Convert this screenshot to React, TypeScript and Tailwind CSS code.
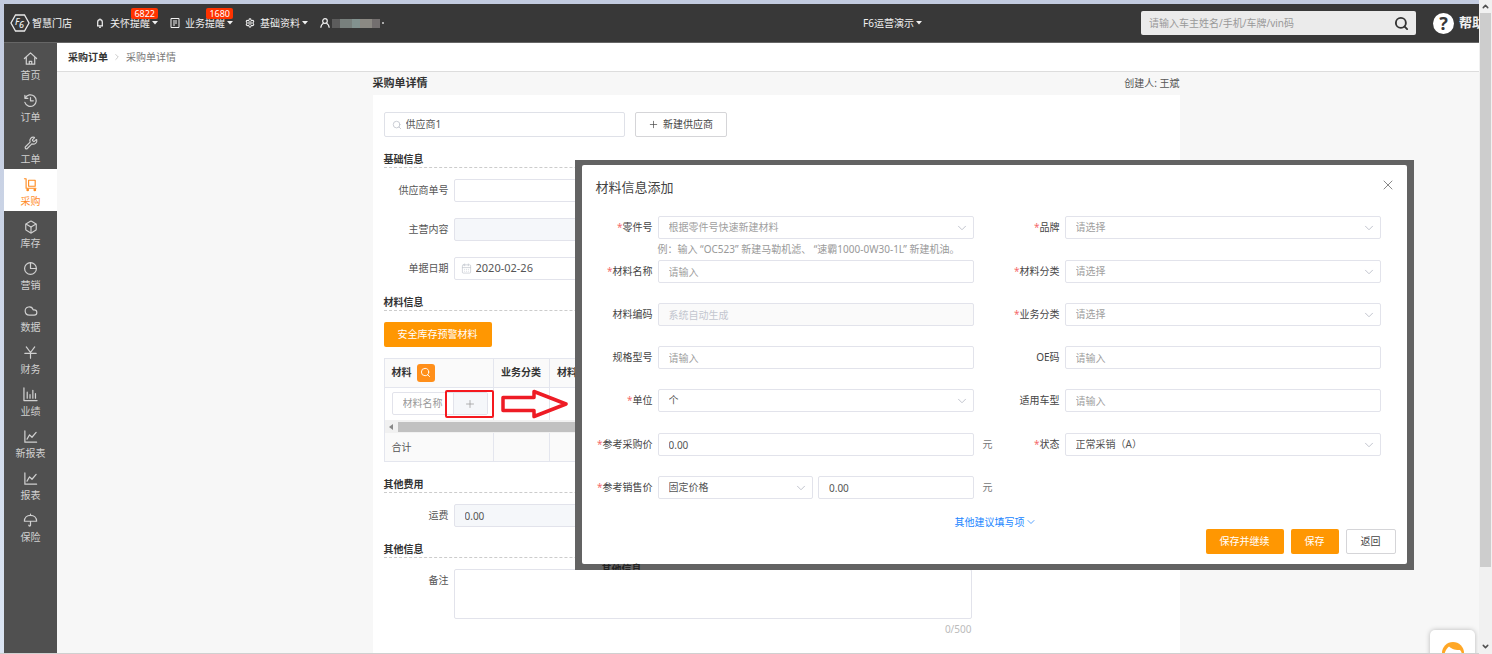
import clsx from "clsx";
import {
  Box,
  CalendarDays,
  ChevronDown,
  ChevronRight,
  Cloud,
  Plus,
  Search,
  Settings,
  Wrench,
  X,
} from "lucide-react";
import { ReactNode } from "react";

const FIELD_STYLE =
  "h-[23px] w-full min-w-0 rounded-[2px] border border-[#e2e3eb] bg-white px-[10px] text-[#555] outline-none placeholder:text-[#a0a0a0] disabled:bg-[#fafafa] disabled:placeholder:text-[#c3c6cf]";

const Svg = ({ children }: { children: ReactNode }) => (
  <svg
    viewBox="0 0 16 16"
    className="size-[15px]"
    fill="none"
    stroke="currentColor"
    strokeWidth="1.3"
    strokeLinecap="round"
    strokeLinejoin="round"
  >
    {children}
  </svg>
);

const HomeIcon = () => (
  <Svg>
    <path d="M1.5 8 8 2l6.500 6M3.500 7v7h9V7M6.700 14v-3h2.600v3" />
  </Svg>
);

const HistoryIcon = () => (
  <Svg>
    <path d="M2.300 5.500A6.200 6.200 0 1 1 2 10M2 2.500v3.200h3.200M8 5v3.300h3" />
  </Svg>
);

const TrolleyIcon = () => (
  <Svg>
    <path d="M1.500 1.800h1.800V12h10.500M6 3.500h7v6.300H6z" strokeWidth="1.200" />
    <circle cx="5" cy="13.800" r=".8" />
    <circle cx="12.600" cy="13.800" r=".8" />
  </Svg>
);

const PieIcon = () => (
  <Svg>
    <circle cx="8" cy="8" r="6.300" />
    <path d="M8 1.700V8h6.300" />
  </Svg>
);

const YenIcon = () => (
  <Svg>
    <path d="M3.500 2 8 8l4.500-6M8 8v6M2 9h12" />
  </Svg>
);

const BarsIcon = () => (
  <Svg>
    <path d="M1 1v13.500h14M4.500 12V5.500M7.500 12V8M10.500 12V3.500M13.300 12V7" />
  </Svg>
);

const LineIcon = () => (
  <Svg>
    <path d="M2 2v12h12.500M4.300 10.800 7 6.200l2.600 2.600L14 3.600" />
  </Svg>
);

const UmbrellaIcon = () => (
  <Svg>
    <path d="M1.500 8.800C1.500 5 4.200 2.500 8 2.500s6.500 2.500 6.500 6.300zM8 2.500V1.300M8 8.800V13c0 1.200-1.800 1.200-1.800 0" />
  </Svg>
);

const MENUS = [
  { label: "首页", icon: <HomeIcon /> },
  { label: "订单", icon: <HistoryIcon /> },
  { label: "工单", icon: <Wrench size={14} strokeWidth={2} /> },
  { label: "采购", icon: <TrolleyIcon />, active: true },
  { label: "库存", icon: <Box size={14} strokeWidth={2} /> },
  { label: "营销", icon: <PieIcon /> },
  { label: "数据", icon: <Cloud size={14} strokeWidth={2} /> },
  { label: "财务", icon: <YenIcon /> },
  { label: "业绩", icon: <BarsIcon /> },
  { label: "新报表", icon: <LineIcon /> },
  { label: "报表", icon: <LineIcon /> },
  { label: "保险", icon: <UmbrellaIcon /> },
];

const Caret = () => (
  <svg viewBox="0 0 6 4" className="h-1 w-[6px] shrink-0" fill="currentColor">
    <path d="M0 0h6L3 3.500z" />
  </svg>
);

const BellIcon = () => (
  <svg viewBox="0 0 10 10" className="size-[10px]" fill="none" stroke="currentColor" strokeWidth="1.200">
    <path d="M2 7.800h6M2.700 7.500V4a2.300 2.300 0 0 1 4.600 0v3.500M5 1.700V.6M4.200 9.300h1.600" />
  </svg>
);

const NoteIcon = () => (
  <svg viewBox="0 0 10 10" className="size-[10px]" fill="none" stroke="currentColor">
    <path d="M1 .5h8v9H1zM3 3h4M3 5h4M3 7h2" />
  </svg>
);

const UserIcon = () => (
  <svg viewBox="0 0 10 10" className="size-[10px]" fill="none" stroke="currentColor" strokeWidth="1.200">
    <circle cx="5" cy="3" r="2.300" />
    <path d="M.8 9.800C1 7.400 2.300 5.800 3.600 5.200M9.200 9.800C9 7.400 7.700 5.800 6.400 5.200" />
  </svg>
);

type NavItemProps = { icon: ReactNode; label: string; badge?: string };

function NavItem({ icon, label, badge }: NavItemProps) {
  return (
    <button type="button" className="relative flex items-center gap-[2px]">
      <span className="mr-[3px] w-[10px]">{icon}</span>
      {label}
      <Caret />
      {badge && (
        <span className="absolute -top-2 right-0 rounded-[2px] bg-[#ff3300] px-[3px] text-[9px] leading-[11px] text-white">
          {badge}
        </span>
      )}
    </button>
  );
}

function Header() {
  return (
    <header className="flex h-[39px] shrink-0 items-center overflow-hidden border-b border-[#666] bg-[#383838] pl-[6px] whitespace-nowrap text-[#f0f0f0]">
      <a href="#home" className="flex items-center gap-[2px] font-medium text-[#ddd]">
        <svg viewBox="0 0 20 18" className="h-[18px] w-5" fill="none">
          <path
            d="M5.500 1h9L19 9l-4.500 8h-9L1 9z"
            stroke="#e8e8e8"
            strokeWidth="1.300"
          />
          <text x="5" y="11" fill="#eee" fontSize="9" fontStyle="italic">
            F
          </text>
          <text x="9" y="14" fill="#eee" fontSize="9" fontStyle="italic">
            6
          </text>
        </svg>
        智慧门店
      </a>
      <nav className="ml-[23px] flex items-center gap-3">
        <NavItem icon={<BellIcon />} label="关怀提醒" badge="6822" />
        <NavItem icon={<NoteIcon />} label="业务提醒" badge="1680" />
        <NavItem icon={<Settings size={10} strokeWidth={2.5} />} label="基础资料" />
        <button type="button" aria-label="用户" className="flex items-center gap-[2px]">
          <UserIcon />
          <span className="flex h-[9px] w-12">
            <span className="w-2 bg-[#5c5c5c]" />
            <span className="w-3 bg-[#78807d]" />
            <span className="w-2 bg-[#82928f]" />
            <span className="w-3 bg-[#8b8983]" />
            <span className="w-2 bg-[#736f6f]" />
          </span>
          <span className="size-[2px] bg-[#aaa]" />
        </button>
      </nav>
      <button type="button" className="mr-[219px] ml-auto flex items-center gap-[2px]">
        F6运营演示
        <Caret />
      </button>
      <div className="flex h-6 w-[275px] items-center rounded-[2px] bg-[#ebebeb] pr-[7px] pl-2">
        <input
          aria-label="搜索"
          placeholder="请输入车主姓名/手机/车牌/vin码"
          className="min-w-0 flex-1 bg-transparent text-[#333] outline-none placeholder:text-[#999]"
        />
        <Search size={15} strokeWidth={3} className="text-[#333]" />
      </div>
      <a href="#help" className="ml-[17px] flex w-[46px] items-center gap-[5px] text-[13px] font-bold">
        <span className="flex size-[21px] shrink-0 items-center justify-center rounded-full bg-white text-[18px] leading-none text-[#383838]">
          ?
        </span>
        帮助
      </a>
    </header>
  );
}

function Sidebar() {
  return (
    <aside className="w-[53px] shrink-0 bg-[#505050] text-[#d0d0d0]">
      {MENUS.map(({ label, icon, active }) => (
        <a
          key={label}
          href="#menu"
          className={clsx(
            "flex h-[42px] flex-col items-center justify-center gap-px pt-[6px]",
            active && "bg-white text-[#ff8b1f]",
          )}
        >
          <span className="flex h-[15px] items-center">{icon}</span>
          <span className="leading-[16px]">{label}</span>
        </a>
      ))}
    </aside>
  );
}

function SectionTitle({ children }: { children: ReactNode }) {
  return (
    <h2 className="mt-[14px] mb-[11px] h-[17px] border-b border-dashed border-[#ccc] leading-4 font-bold text-[#333]">
      {children}
    </h2>
  );
}

type RowProps = { id: string; label: string; children: ReactNode };

function OrderRow({ id, label, children }: RowProps) {
  return (
    <div className="flex items-start gap-[5px]">
      <label htmlFor={id} className="w-[65px] text-right leading-[22px]">
        {label}
      </label>
      {children}
    </div>
  );
}

function MaterialTable() {
  return (
    <div className="relative mt-[11px] border border-[#e4e6ee]">
      <table className="w-full table-fixed text-left">
        <colgroup>
          <col className="w-[109px]" />
          <col className="w-14" />
          <col />
        </colgroup>
        <thead>
          <tr className="h-7 border-b border-[#e4e6ee] bg-[#fafafa] text-[#333]">
            <th className="border-r border-[#e4e6ee] pl-[7px]">
              <div className="flex items-center gap-[5px]">
                材料
                <button
                  type="button"
                  aria-label="搜索材料"
                  className="flex size-[18px] items-center justify-center rounded-[3px] bg-[#ff8f1a] text-white"
                >
                  <Search size={11} strokeWidth={2} />
                </button>
              </div>
            </th>
            <th className="border-r border-[#e4e6ee] pl-[7px]">业务分类</th>
            <th className="pl-[7px]">材料分类</th>
          </tr>
        </thead>
        <tbody>
          <tr className="h-[33px]">
            <td className="border-r border-[#e4e6ee] pl-[7px]">
              <div className="flex h-[23px] w-24 overflow-hidden rounded-[2px] border border-[#e2e3eb]">
                <input
                  aria-label="材料名称"
                  placeholder="材料名称"
                  className="w-[60px] pl-[10px] outline-none placeholder:text-[#999]"
                />
                <button
                  type="button"
                  aria-label="新增材料"
                  className="flex flex-1 items-center justify-center border-l border-[#e2e3eb] bg-[#f5f7fa] text-[#999]"
                >
                  <Plus size={12} strokeWidth={1.5} />
                </button>
              </div>
            </td>
            <td className="border-r border-[#e4e6ee]" />
            <td />
          </tr>
        </tbody>
      </table>
      <div className="flex h-[13px] items-center bg-[#f1f1f1] pr-3 pl-1">
        <svg viewBox="0 0 4 6" className="mr-[5px] h-[6px] w-1" fill="#888">
          <path d="M4 0v6L0 3z" />
        </svg>
        <div className="h-[10px] w-1/2 bg-[#c1c1c1]" />
      </div>
      <table className="w-full table-fixed">
        <colgroup>
          <col className="w-[109px]" />
          <col className="w-14" />
          <col />
        </colgroup>
        <tbody>
          <tr className="h-7 bg-[#fafafa]">
            <td className="border-r border-[#e4e6ee] pl-[7px]">合计</td>
            <td className="border-r border-[#e4e6ee]" />
            <td />
          </tr>
        </tbody>
      </table>

      {/* 新增按钮的操作指引 */}
      <div className="absolute top-[31px] left-[60px] h-7 w-[49px] rounded-[2px] border-2 border-[#f5191f]" />
      <svg
        viewBox="0 0 68 30"
        className="absolute top-[30px] left-[116px] h-[30px] w-[68px]"
        fill="none"
        stroke="#ee1c25"
        strokeWidth="3.500"
        strokeLinejoin="round"
      >
        <path d="M2 8.500h31V2.500L65 15 33 27.500V21.500H2z" />
      </svg>
    </div>
  );
}

type FieldProps = {
  id: string;
  label: string;
  required?: boolean;
  unit?: string;
  hint?: string;
  children: ReactNode;
};

function Field({ id, label, required, unit, hint, children }: FieldProps) {
  return (
    <div className="flex items-start gap-[5px]">
      <label htmlFor={id} className="w-[60px] shrink-0 text-right leading-[23px] text-[#444]">
        {required && <span className="text-[#f56c6c]">*</span>}
        {label}
      </label>
      <div className="w-[316px]">
        <div className="flex gap-[5px]">{children}</div>
        {hint && <p className="leading-5 whitespace-nowrap text-[#999]">{hint}</p>}
      </div>
      {unit && <span className="ml-1 leading-[23px] text-[#777]">{unit}</span>}
    </div>
  );
}

type SelectProps = { id: string; value: string; muted?: boolean };

function Select({ id, value, muted }: SelectProps) {
  return (
    <div className="relative min-w-0 flex-1">
      <select
        id={id}
        className={clsx(FIELD_STYLE, "appearance-none", muted && "text-[#a0a0a0]")}
      >
        <option>{value}</option>
      </select>
      <ChevronDown
        size={14}
        strokeWidth={1.5}
        className="pointer-events-none absolute top-[5px] right-[5px] text-[#b8bcc6]"
      />
    </div>
  );
}

function MaterialDialog() {
  return (
    <div className="absolute top-[65px] left-[202px] h-[410px] w-[839px] overflow-hidden bg-[#636363] px-[7px] pt-[5px]">
      <section
        role="dialog"
        aria-label="材料信息添加"
        className="h-[399px] rounded-[2px] bg-white pt-3 pr-[11px] pl-[14px]"
      >
        <div className="flex h-[22px] items-start justify-between">
          <h2 className="text-[13px] leading-5 text-[#444]">材料信息添加</h2>
          <button type="button" aria-label="关闭" className="text-[#888]">
            <X size={16} strokeWidth={1.5} />
          </button>
        </div>
        <div className="mt-[17px] -ml-[3px] grid grid-cols-[auto_auto] grid-rows-[44px_43px_43px_43px_44px_43px_28px] justify-between pr-[15px]">
          <Field
            id="partNo"
            label="零件号"
            required
            hint="例：输入 “OC523” 新建马勒机滤、 “速霸1000-0W30-1L” 新建机油。"
          >
            <Select id="partNo" value="根据零件号快速新建材料" muted />
          </Field>
          <Field id="brand" label="品牌" required>
            <Select id="brand" value="请选择" muted />
          </Field>
          <Field id="materialName" label="材料名称" required>
            <input id="materialName" placeholder="请输入" className={FIELD_STYLE} />
          </Field>
          <Field id="materialType" label="材料分类" required>
            <Select id="materialType" value="请选择" muted />
          </Field>
          <Field id="materialCode" label="材料编码">
            <input
              id="materialCode"
              placeholder="系统自动生成"
              disabled
              className={FIELD_STYLE}
            />
          </Field>
          <Field id="bizType" label="业务分类" required>
            <Select id="bizType" value="请选择" muted />
          </Field>
          <Field id="spec" label="规格型号">
            <input id="spec" placeholder="请输入" className={FIELD_STYLE} />
          </Field>
          <Field id="oeCode" label="OE码">
            <input id="oeCode" placeholder="请输入" className={FIELD_STYLE} />
          </Field>
          <Field id="unit" label="单位" required>
            <Select id="unit" value="个" />
          </Field>
          <Field id="carModel" label="适用车型">
            <input id="carModel" placeholder="请输入" className={FIELD_STYLE} />
          </Field>
          <Field id="purchasePrice" label="参考采购价" required unit="元">
            <input id="purchasePrice" defaultValue="0.00" className={FIELD_STYLE} />
          </Field>
          <Field id="status" label="状态" required>
            <Select id="status" value="正常采销（A）" />
          </Field>
          <Field id="salePriceType" label="参考销售价" required unit="元">
            <Select id="salePriceType" value="固定价格" />
            <div className="flex-1">
              <input aria-label="销售价" defaultValue="0.00" className={FIELD_STYLE} />
            </div>
          </Field>
        </div>
        <button type="button" className="mx-auto mt-[11px] flex h-[14px] items-center text-[#2186ff]">
          其他建议填写项
          <ChevronDown size={12} strokeWidth={1.5} />
        </button>
        <div className="flex justify-end gap-[7px]">
          <button type="button" className="h-[25px] rounded-[2px] bg-[#ff9702] px-[14px] text-white">
            保存并继续
          </button>
          <button type="button" className="h-[25px] rounded-[2px] bg-[#ff9702] px-[14px] text-white">
            保存
          </button>
          <button
            type="button"
            className="h-[25px] rounded-[2px] border border-[#d5d5d8] px-[14px] text-[#444]"
          >
            返回
          </button>
        </div>
      </section>
      <p className="ml-5 leading-[10px] font-bold text-[#222]">其他信息</p>
    </div>
  );
}

function OrderForm() {
  return (
    <div className="relative flex-1 bg-white px-[11px] pt-[17px]">
      <div className="flex gap-[10px]">
        <div className="flex h-[25px] w-[241px] items-center gap-1 rounded-[2px] border border-[#dfe1e8] px-[7px]">
          <Search size={10} strokeWidth={2} className="text-[#c0c4cc]" />
          <input
            aria-label="供应商"
            defaultValue="供应商1"
            className="min-w-0 flex-1 text-[#555] outline-none"
          />
        </div>
        <button
          type="button"
          className="flex h-[25px] w-[92px] items-center justify-center gap-1 rounded-[2px] border border-[#d5d5d8] text-[#444]"
        >
          <Plus size={11} strokeWidth={1.5} />
          新建供应商
        </button>
      </div>

      <SectionTitle>基础信息</SectionTitle>
      <div className="flex flex-col gap-4">
        <OrderRow id="orderNo" label="供应商单号">
          <div className="w-[240px]">
            <input id="orderNo" className={FIELD_STYLE} />
          </div>
        </OrderRow>
        <OrderRow id="business" label="主营内容">
          <div className="w-[240px]">
            <input
              id="business"
              readOnly
              className="block h-[23px] w-full rounded-[2px] border border-[#e2e3eb] bg-[#f5f7fa] px-[10px]"
            />
          </div>
        </OrderRow>
        <OrderRow id="date" label="单据日期">
          <div className="flex h-[23px] w-[240px] items-center gap-1 rounded-[2px] border border-[#e2e3eb] px-[6px]">
            <CalendarDays size={11} strokeWidth={1.5} className="text-[#c0c4cc]" />
            <input
              id="date"
              defaultValue="2020-02-26"
              className="min-w-0 flex-1 text-[11px] text-[#555] outline-none"
            />
          </div>
        </OrderRow>
      </div>

      <SectionTitle>材料信息</SectionTitle>
      <button type="button" className="block h-[25px] w-[108px] rounded-[2px] bg-[#ff9702] text-white">
        安全库存预警材料
      </button>
      <MaterialTable />

      <SectionTitle>其他费用</SectionTitle>
      <OrderRow id="freight" label="运费">
        <input
          id="freight"
          readOnly
          defaultValue="0.00"
          className="block h-[23px] w-[240px] rounded-[2px] border border-[#e2e3eb] bg-[#f5f7fa] px-[10px] text-[#555]"
        />
      </OrderRow>

      <SectionTitle>其他信息</SectionTitle>
      <OrderRow id="remark" label="备注">
        <div className="w-[518px]">
          <textarea
            id="remark"
            className="block h-[50px] w-full resize-none rounded-[2px] border border-[#e2e3eb] outline-none"
          />
          <p className="mt-[2px] text-right leading-4 text-[#bbb]">0/500</p>
        </div>
      </OrderRow>

      <MaterialDialog />
    </div>
  );
}

// 右下角客服入口
const ServiceEntry = () => (
  <button
    type="button"
    aria-label="在线客服"
    className="absolute right-1 -bottom-[22px] flex h-[45px] w-[45px] items-start justify-center rounded-[5px] bg-white pt-[11px] shadow-[0_0_5px_rgba(0,0,0,0.25)]"
  >
    <svg viewBox="0 0 24 24" className="size-6">
      <circle cx="12" cy="12" r="11" fill="#ffa726" />
      <path
        d="M3.500 13.500C4 9.500 6 7.500 8 5.500c3 3 7.500 3.500 11 3.500 1.500 1.500 1.800 3 1.800 4.500 0 5-4 8-8.800 8s-8.500-3.500-8.500-8z"
        fill="#fff"
      />
    </svg>
  </button>
);

function ScrollBar() {
  return (
    <div className="flex w-[13px] shrink-0 flex-col items-center bg-[#f1f1f1] text-[#505050]">
      <div className="flex h-[13px] items-center">
        <ChevronDown size={9} strokeWidth={4} className="rotate-180" />
      </div>
      <div className="w-[11px] flex-[554] bg-[#cdcdcd]" />
      <div className="flex-[72]" />
      <div className="flex h-[15px] items-center">
        <ChevronDown size={9} strokeWidth={4} />
      </div>
    </div>
  );
}

export default function App() {
  return (
    <div className="flex h-screen overflow-hidden bg-white font-['Noto_Sans','Noto_Sans_CJK_SC',sans-serif] text-[10px] text-[#555]">
      <div className="flex min-w-0 flex-1 flex-col border-b border-[#d0d0d0] bg-linear-to-b from-[#c2cbdf] to-[#dbe5f3] pt-1 pl-1">
        <Header />
        <div className="flex min-h-0 flex-1">
          <Sidebar />
          <main className="relative flex min-w-0 flex-1 flex-col overflow-hidden bg-[#f7f7f7]">
            <nav className="flex h-[29px] shrink-0 items-center gap-1 border-b border-[#ddd] bg-white pl-[11px]">
              <a href="#orders" className="font-bold text-[#333]">
                采购订单
              </a>
              <ChevronRight size={10} strokeWidth={1.5} className="text-[#aaa]" />
              <span className="text-[#777]">采购单详情</span>
            </nav>
            <div className="flex flex-1 flex-col pl-4">
              <div className="mx-auto flex w-[807px] flex-1 flex-col">
                <div className="flex h-[23px] items-center justify-between">
                  <h1 className="text-[11px] font-bold text-[#333]">采购单详情</h1>
                  <span>创建人: 王斌</span>
                </div>
                <OrderForm />
              </div>
            </div>
            <ServiceEntry />
          </main>
        </div>
      </div>
      <ScrollBar />
    </div>
  );
}
